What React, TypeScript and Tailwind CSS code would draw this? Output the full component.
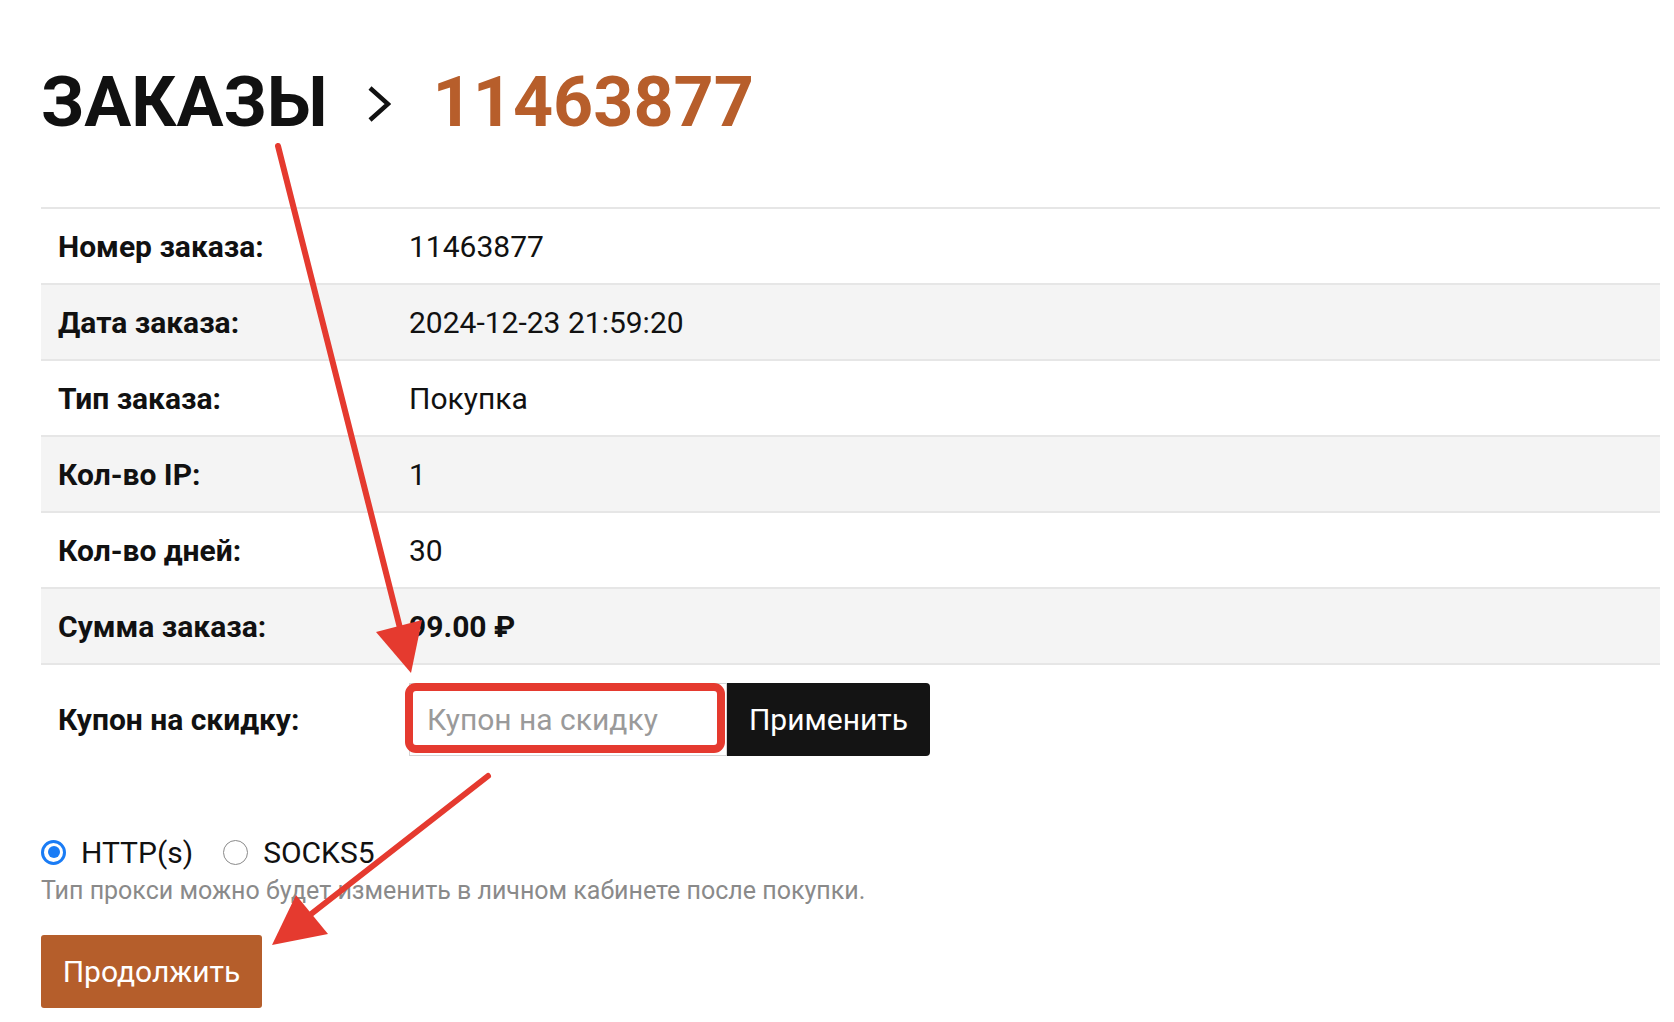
import React from "react";

const rows = [
  { label: "Номер заказа:", value: "11463877" },
  { label: "Дата заказа:", value: "2024-12-23 21:59:20" },
  { label: "Тип заказа:", value: "Покупка" },
  { label: "Кол-во IP:", value: "1" },
  { label: "Кол-во дней:", value: "30" },
  { label: "Сумма заказа:", value: "99.00 ₽", bold: true },
];

function Annotations() {
  return (
    <svg
      className="absolute left-0 top-0 pointer-events-none"
      width="1674"
      height="1022"
      viewBox="0 0 1674 1022"
    >
      {/* arrow to coupon field */}
      <line x1="278" y1="146" x2="401" y2="632" stroke="#e53a2f" strokeWidth="6" strokeLinecap="round" />
      <polygon points="411,673 376,632 422,620" fill="#e53a2f" />
      {/* highlight round the input */}
      <rect x="409" y="687" width="312" height="62" rx="7" fill="none" stroke="#e53a2f" strokeWidth="8" />
      {/* arrow to continue button */}
      <line x1="488" y1="776" x2="306" y2="918" stroke="#e53a2f" strokeWidth="6" strokeLinecap="round" />
      <polygon points="272,945 296,895 328,934" fill="#e53a2f" />
    </svg>
  );
}

export default function App() {
  return (
    <div className="relative w-[1674px] h-[1022px] overflow-hidden bg-white font-['Roboto',sans-serif] text-[#111]">
      <div className="pl-[41px] pt-[66px]">
        {/* Title */}
        <div className="flex items-center h-[72px]">
          <span className="text-[70px] leading-none font-bold">ЗАКАЗЫ</span>
          <svg className="ml-[39px] mt-[3px]" width="24" height="36" viewBox="0 0 24 36">
            <polyline points="3,2 21,18 3,34" fill="none" stroke="#111" strokeWidth="4.5" />
          </svg>
          <span className="ml-[42px] text-[70px] leading-none font-bold text-[#b75e2b]">11463877</span>
        </div>

        {/* Order table */}
        <div className="mt-[69px] w-[1619px] border-t-2 border-[#e6e6e6]">
          {rows.map((r, i) => (
            <div
              key={r.label}
              className={`grid grid-cols-[368px_1fr] items-center h-[76px] border-b-2 border-[#e6e6e6] text-[30px] ${
                i % 2 === 1 ? "bg-[#f4f4f4]" : "bg-white"
              }`}
            >
              <div className="pl-[17px] font-bold">{r.label}</div>
              <div className={r.bold ? "font-bold" : ""}>{r.value}</div>
            </div>
          ))}

          {/* Coupon */}
          <div className="grid grid-cols-[368px_1fr] items-center py-[18px] text-[30px]">
            <div className="pl-[17px] font-bold">Купон на скидку:</div>
            <div className="flex">
              <input
                className="w-[318px] h-[73px] px-[17px] border border-[#d4d4d4] text-[30px] outline-none placeholder:text-[#9a9a9a]"
                placeholder="Купон на скидку"
              />
              <button className="w-[203px] h-[73px] bg-[#141414] text-white text-[30px] rounded-r-[4px]">
                Применить
              </button>
            </div>
          </div>
        </div>

        {/* Proxy type */}
        <div className="mt-[60px] flex items-center h-[36px] text-[30px]">
          <span className="w-[25px] h-[25px] rounded-full border-[3px] border-[#1a7cf5] bg-white flex items-center justify-center">
            <span className="w-[12px] h-[12px] rounded-full bg-[#1a7cf5]" />
          </span>
          <span className="ml-[15px]">HTTP(s)</span>
          <span className="ml-[30px] w-[25px] h-[25px] rounded-full border-[1.5px] border-[#8a8a8a] bg-white" />
          <span className="ml-[15px]">SOCKS5</span>
        </div>
        <p className="mt-[6px] text-[25px] leading-[30px] text-[#8a8a8a]">
          Тип прокси можно будет изменить в личном кабинете после покупки.
        </p>

        <button className="mt-[29px] w-[221px] h-[73px] rounded-[3px] bg-[#b55e2b] text-white text-[30px]">
          Продолжить
        </button>
      </div>

      <Annotations />
    </div>
  );
}
